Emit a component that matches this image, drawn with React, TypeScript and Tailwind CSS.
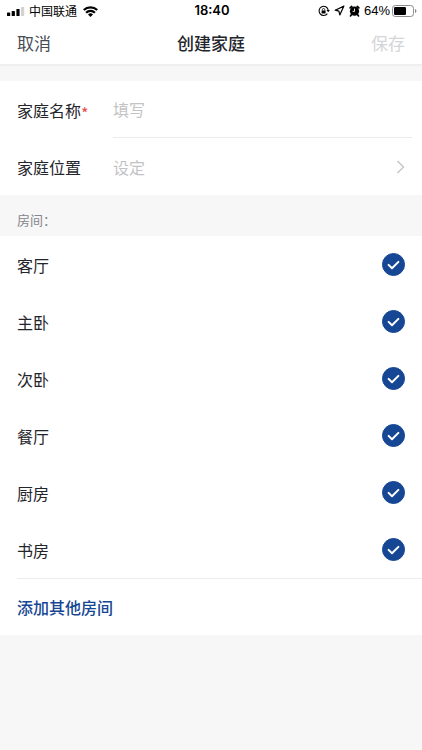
import { useState } from "react";

const ROOMS = ["客厅", "主卧", "次卧", "餐厅", "厨房", "书房"];

function StatusBar() {
  return (
    <div className="grid h-[22px] grid-cols-[1fr_auto_1fr] items-center pl-[7px] pr-[5px] text-xs text-black">
      <div className="flex items-center">
        <svg width="18" height="9" viewBox="0 0 18 9" role="img" aria-label="信号">
          <rect x="0" y="5.5" width="3.2" height="3.5" rx="0.6" fill="#000" />
          <rect x="4.7" y="4" width="3.2" height="5" rx="0.6" fill="#000" />
          <rect x="9.4" y="2" width="3.2" height="7" rx="0.6" fill="#000" />
          <rect x="14" y="0" width="3.2" height="9" rx="0.6" fill="#d2d2d2" />
        </svg>
        <span className="ml-1">中国联通</span>
        <svg className="ml-1.5" width="15" height="11" viewBox="0 0 15 11" role="img" aria-label="Wi-Fi">
          <g fill="none" stroke="#000" strokeWidth="2.2">
            <path d="M0.8 4a9.6 9.6 0 0 1 13.4 0" />
            <path d="M3.1 6.800a6.200 6.200 0 0 1 8.800 0" />
          </g>
          <path d="M7.5 10.900 5 8.400a3.600 3.600 0 0 1 5 0Z" fill="#000" />
        </svg>
      </div>
      <span className="font-[Inter] text-[13px] font-semibold">18:40</span>
      <div className="flex items-center justify-end">
        <svg width="12" height="12" viewBox="0 0 12 12" role="img" aria-label="方向锁定">
          <path d="M9.4 8.6A4.6 4.6 0 1 1 10.2 5" fill="none" stroke="#000" strokeWidth="1.1" />
          <path d="M8.5 5h3.4l-1.7 2.3Z" fill="#000" />
          <rect x="3.6" y="5.4" width="4" height="3" rx="0.4" fill="#000" />
          <path d="M4.4 5.6V4.7a1.2 1.2 0 0 1 2.4 0v.9" fill="none" stroke="#000" strokeWidth="0.8" />
        </svg>
        <svg className="ml-1" width="11" height="11" viewBox="0 0 11 11" role="img" aria-label="定位">
          <path d="M9.900 1.100 1.200 5.200l3.700.9.900 3.800Z" fill="none" stroke="#000" strokeWidth="1.200" strokeLinejoin="round" />
        </svg>
        <svg className="ml-1" width="11" height="12" viewBox="0 0 11 12" role="img" aria-label="闹钟">
          <circle cx="5.5" cy="6.2" r="4.6" fill="#000" />
          <path d="M1.200 2.900 2.700 1.500M9.800 2.900 8.300 1.500M2.400 9.600 1.600 10.900M8.600 9.600l.8 1.300" stroke="#000" strokeWidth="1.800" strokeLinecap="round" />
          <path d="M5.500 3.600v2.800H3.600" fill="none" stroke="#fff" strokeWidth="0.9" />
        </svg>
        <span className="ml-1 font-['Liberation_Sans'] text-[13px]">64%</span>
        <svg className="ml-[2px]" width="25" height="12" viewBox="0 0 25 12" role="img" aria-label="电池 64%">
          <rect x="0.5" y="0.5" width="21" height="11" rx="2.8" fill="none" stroke="#8c8c8c" />
          <rect x="2" y="2" width="12" height="8" rx="1.3" fill="#000" />
          <path d="M23 4v4c.9-.3 1.4-1 1.4-2S23.900 4.300 23 4Z" fill="#8c8c8c" />
        </svg>
      </div>
    </div>
  );
}

function RoomRow({ name }: { name: string }) {
  const [checked, setChecked] = useState(true);
  return (
    <li>
      <label className="flex h-[57px] items-center justify-between px-[17px]">
        <span>{name}</span>
        <span className="grid size-[23px] place-items-center">
          <input
            type="checkbox"
            checked={checked}
            onChange={() => setChecked(!checked)}
            className="col-start-1 row-start-1 size-[23px] appearance-none rounded-full border border-[#c8c8cc] checked:border-[#164794] checked:bg-[#164794]"
          />
          <svg className="pointer-events-none col-start-1 row-start-1" width="13" height="10" viewBox="0 0 13 10" aria-hidden="true">
            <path d="M1.600 4.900 5 8.200 11.400 1.900" fill="none" stroke="#fff" strokeWidth="2" strokeLinecap="round" strokeLinejoin="round" />
          </svg>
        </span>
      </label>
    </li>
  );
}

export default function App() {
  return (
    <div className="min-h-screen bg-[#f7f7f7] font-['Noto_Sans_CJK_SC',sans-serif] text-base text-[#24252b]">
      <header className="border-b-2 border-[#efefef] bg-white">
        <StatusBar />
        <div className="grid h-[42px] grid-cols-[1fr_auto_1fr] items-center px-[17px] text-[17px]">
          <button type="button" className="justify-self-start text-[#484c55]">取消</button>
          <h1 className="font-medium">创建家庭</h1>
          <button type="button" disabled className="justify-self-end text-[#d4d5d8]">保存</button>
        </div>
      </header>
      <main className="pt-[15px]">
        <form className="bg-white pl-[17px]">
          <div className="flex h-[57px] items-center">
            <label htmlFor="family-name" className="flex w-24 shrink-0 items-center">
              家庭名称<span className="pt-1.5 text-[#e8474c]">*</span>
            </label>
            <input
              id="family-name"
              placeholder="填写"
              className="mr-[10px] h-full min-w-0 flex-1 border-b border-[#ececec] outline-none placeholder:text-[#c3c3c5]"
            />
          </div>
          <button type="button" className="flex h-[57px] w-full items-center pr-[17px] text-left">
            <span className="w-24 shrink-0">家庭位置</span>
            <span className="flex-1 text-[#c3c3c5]">设定</span>
            <svg width="9" height="14" viewBox="0 0 9 14" aria-hidden="true">
              <path d="m1.500 1 6 6-6 6" fill="none" stroke="#c7c7cb" strokeWidth="1.500" />
            </svg>
          </button>
        </form>
        <section>
          <h2 className="flex h-[41px] items-center px-[17px] pt-2 text-[13px] text-[#85868c]">房间：</h2>
          <div className="bg-white">
            <ul>
              {ROOMS.map((name) => (
                <RoomRow key={name} name={name} />
              ))}
            </ul>
            <div className="pl-[17px]">
              <button type="button" className="h-[57px] w-full border-t border-[#ececec] text-left font-medium text-[#164794]">
                添加其他房间
              </button>
            </div>
          </div>
        </section>
      </main>
    </div>
  );
}
